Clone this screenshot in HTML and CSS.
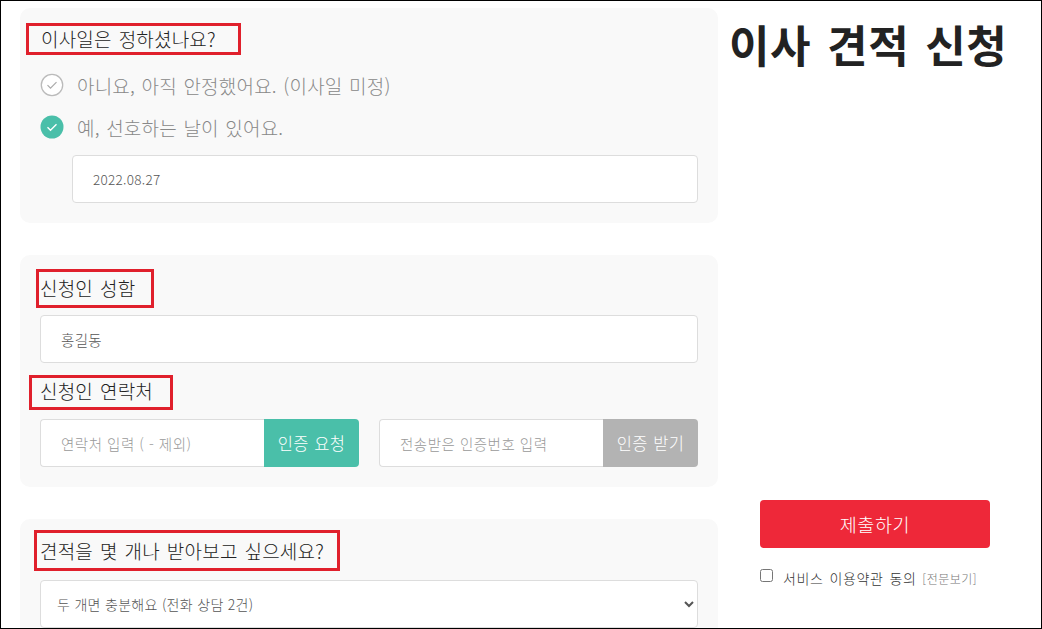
FILE: index.html
```html
<!DOCTYPE html>
<html lang="ko">
<head>
  <meta charset="UTF-8">
  <title>이사 견적 신청</title>
  <link rel="stylesheet" href="styles.css">
</head>
<body>
  <div class="frame">
    <form class="form-col">

      <div class="box box-date">
        <div class="label-mark mark-date">이사일은 정하셨나요?</div>
        <div class="radio-row first">
          <svg class="check" width="24" height="24" viewBox="0 0 24 24"><circle cx="12" cy="12" r="10.7" fill="#fff" stroke="#bbb" stroke-width="1.3"/><path d="M7.5 12.2l3 3 6-6" fill="none" stroke="#aaa" stroke-width="1.2"/></svg>
          <span>아니요, 아직 안정했어요. (이사일 미정)</span>
        </div>
        <div class="radio-row">
          <svg class="check" width="24" height="24" viewBox="0 0 24 24"><circle cx="12" cy="12" r="11.5" fill="#4abfa9"/><path d="M7.5 12.2l3 3 6-6" fill="none" stroke="#fff" stroke-width="1.4"/></svg>
          <span>예, 선호하는 날이 있어요.</span>
        </div>
        <input class="field date-field" type="text" value="2022.08.27">
      </div>

      <div class="box box-person">
        <div class="label-mark mark-name">신청인 성함</div>
        <input class="field name-field" type="text" value="홍길동">
        <div class="label-mark mark-phone">신청인 연락처</div>
        <div class="phone-row">
          <div class="field-group">
            <input class="field ph" type="text" placeholder="연락처 입력 ( - 제외)">
            <div class="btn btn-green">인증 요청</div>
          </div>
          <div class="field-group">
            <input class="field ph" type="text" placeholder="전송받은 인증번호 입력">
            <div class="btn btn-gray">인증 받기</div>
          </div>
        </div>
      </div>

      <div class="box box-count">
        <div class="label-mark mark-count">견적을 몇 개나 받아보고 싶으세요?</div>
        <select class="field select-field">
          <option>두 개면 충분해요 (전화 상담 2건)</option>
        </select>
      </div>

    </form>

    <div class="side-col">
      <h1>이사 견적 신청</h1>
      <div class="submit-area">
        <div class="submit">제출하기</div>
        <label class="agree">
          <input class="agree-box" type="checkbox">
          <span>서비스 이용약관 동의</span>
          <span class="agree-more">[전문보기]</span>
        </label>
      </div>
    </div>
  </div>
</body>
</html>
```

FILE: styles.css
```css
* {
  box-sizing: border-box;
}

html, body {
  margin: 0;
  height: 100%;
}

body {
  background: #fff;
  color: #333;
  font-family: "Noto Sans CJK KR", "Noto Sans", sans-serif;
  font-weight: 300;
  overflow: hidden;
}

.frame {
  display: flex;
  height: 629px;
  padding-left: 19px;
  border: 1px solid #000;
  overflow: hidden;
}

.form-col {
  width: 698px;
  flex-shrink: 0;
  padding-top: 7px;
}

.box {
  background: #f9f9f9;
  border-radius: 10px;
  margin-bottom: 32px;
}

.box-date {
  height: 215px;
  padding: 15px 20px 0;
}

.box-person {
  height: 232px;
  padding: 14px 20px 0;
}

.box-count {
  height: 130px;
  padding: 11px 20px 0;
}

.label-mark {
  display: inline-block;
  outline: 3px solid #e0202c;
  outline-offset: -3px;
  font-size: 19px;
  letter-spacing: 0.2px;
  word-spacing: 1.4px;
  color: #222;
  white-space: nowrap;
}

.mark-date {
  width: 215px;
  height: 32px;
  margin-left: -14px;
  padding-left: 15px;
  line-height: 31px;
}

.mark-name {
  width: 118px;
  height: 39px;
  margin-left: -4px;
  padding-left: 4px;
  line-height: 37px;
}

.mark-phone {
  display: block;
  width: 144px;
  height: 35px;
  margin: 12px 0 0 -11px;
  padding-left: 11px;
  line-height: 32px;
}

.mark-count {
  width: 306px;
  height: 41px;
  margin-left: -6px;
  padding-left: 6px;
  line-height: 41px;
}

.radio-row {
  display: flex;
  align-items: center;
  gap: 13px;
  height: 24px;
  margin-top: 18px;
  font-size: 19px;
  letter-spacing: 0.2px;
  word-spacing: 1px;
  color: #888;
}

.check {
  flex-shrink: 0;
}

.field {
  display: block;
  width: 100%;
  background: #fff;
  border: 1px solid #ddd;
  border-radius: 4px;
  padding: 0 0 0 20px;
  font-family: inherit;
  font-weight: 300;
  font-size: 14.5px;
  letter-spacing: 0.5px;
  color: #555;
  outline: none;
}

.field::placeholder {
  color: #999;
  opacity: 1;
}

.date-field {
  width: 626px;
  height: 48px;
  margin: 16px 0 0 32px;
  font-size: 13.5px;
  letter-spacing: 0.3px;
}

.name-field {
  height: 48px;
  margin-top: 7px;
  letter-spacing: 0.3px;
}

.phone-row {
  display: flex;
  gap: 20px;
  margin-top: 9px;
}

.field-group {
  display: flex;
  width: 319px;
  height: 48px;
}

.ph {
  flex: 1;
  min-width: 0;
  border-right: 0;
  border-radius: 4px 0 0 4px;
}

.btn {
  flex-shrink: 0;
  width: 95px;
  display: flex;
  align-items: center;
  justify-content: center;
  border-radius: 0 4px 4px 0;
  color: #fff;
  font-size: 16.5px;
  letter-spacing: 0.3px;
  word-spacing: 0.5px;
}

.btn-green {
  background: #4abfa9;
}

.btn-gray {
  background: #b3b3b3;
}

.select-field {
  height: 48px;
  margin-top: 9px;
  padding-left: 12px;
  font-size: 14px;
  letter-spacing: 0.3px;
  color: #555;
}

.side-col {
  flex: 1;
  display: flex;
  flex-direction: column;
  padding-top: 12px;
}

h1 {
  margin: 0 0 0 11px;
  font-size: 44px;
  line-height: 62px;
  font-weight: 700;
  letter-spacing: 0.6px;
  word-spacing: 3px;
  color: #222;
  white-space: nowrap;
}

.submit-area {
  margin: auto 0 40px 42px;
  width: 230px;
}

.submit {
  height: 48px;
  display: flex;
  align-items: center;
  justify-content: center;
  background: #ee2839;
  border-radius: 4px;
  color: #fff;
  font-size: 18.5px;
  letter-spacing: 0.6px;
}

.agree {
  display: flex;
  align-items: center;
  margin-top: 20px;
  font-size: 14px;
  letter-spacing: 0.6px;
  word-spacing: 1.5px;
  color: #333;
  white-space: nowrap;
}

.agree-box {
  width: 13px;
  height: 13px;
  margin: -5px 10px 0 0;
}

.agree-more {
  margin-left: 6px;
  font-size: 12px;
  letter-spacing: 0.5px;
  color: #777;
}
```
